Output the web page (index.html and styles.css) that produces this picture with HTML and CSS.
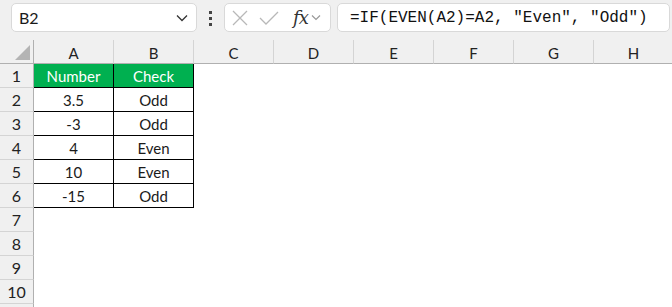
FILE: index.html
```html
<!DOCTYPE html>
<html lang="en">
<head>
  <meta charset="UTF-8" />
  <title>Sheet – EVEN check</title>
  <link rel="stylesheet" href="styles.css">
</head>
<body>
  <div class="toolbar">
    <div class="name-box">
      <span>B2</span>
      <svg class="chev" width="12" height="8" viewBox="0 0 12 8"><path d="M1 1.5 L6 6.5 L11 1.5" fill="none" stroke="#333" stroke-width="1.3"/></svg>
    </div>
    <div class="dots"><i></i><i></i><i></i></div>
    <div class="fx-box">
      <svg width="18" height="18" viewBox="0 0 18 18"><path d="M2 2 L16 16 M16 2 L2 16" stroke="#b8b8b8" stroke-width="1.3" fill="none"/></svg>
      <svg width="20" height="18" viewBox="0 0 20 18"><path d="M1 9 L7 15 L19 3" stroke="#b8b8b8" stroke-width="1.3" fill="none"/></svg>
      <span class="fx">fx</span>
      <svg class="chev-sm" width="10" height="7" viewBox="0 0 10 7"><path d="M1 1.5 L5 5.5 L9 1.5" fill="none" stroke="#999" stroke-width="1.2"/></svg>
    </div>
    <div class="formula">=IF(EVEN(A2)=A2, "Even", "Odd")</div>
  </div>

  <div class="sheet">
    <div class="corner"><span class="tri"></span></div>
    <div class="col-head">A</div>
    <div class="col-head">B</div>
    <div class="col-head">C</div>
    <div class="col-head">D</div>
    <div class="col-head">E</div>
    <div class="col-head">F</div>
    <div class="col-head">G</div>
    <div class="col-head">H</div>

    <div class="row-head">1</div>
    <div class="cell th">Number</div><div class="cell th">Check</div>
    <div class="blank"></div><div class="blank"></div><div class="blank"></div><div class="blank"></div><div class="blank"></div><div class="blank"></div>

    <div class="row-head">2</div>
    <div class="cell">3.5</div><div class="cell">Odd</div>
    <div class="blank"></div><div class="blank"></div><div class="blank"></div><div class="blank"></div><div class="blank"></div><div class="blank"></div>

    <div class="row-head">3</div>
    <div class="cell">-3</div><div class="cell">Odd</div>
    <div class="blank"></div><div class="blank"></div><div class="blank"></div><div class="blank"></div><div class="blank"></div><div class="blank"></div>

    <div class="row-head">4</div>
    <div class="cell">4</div><div class="cell">Even</div>
    <div class="blank"></div><div class="blank"></div><div class="blank"></div><div class="blank"></div><div class="blank"></div><div class="blank"></div>

    <div class="row-head">5</div>
    <div class="cell">10</div><div class="cell">Even</div>
    <div class="blank"></div><div class="blank"></div><div class="blank"></div><div class="blank"></div><div class="blank"></div><div class="blank"></div>

    <div class="row-head">6</div>
    <div class="cell">-15</div><div class="cell">Odd</div>
    <div class="blank"></div><div class="blank"></div><div class="blank"></div><div class="blank"></div><div class="blank"></div><div class="blank"></div>

    <div class="row-head">7</div>
    <div class="blank wide"></div>
    <div class="row-head">8</div>
    <div class="blank wide"></div>
    <div class="row-head">9</div>
    <div class="blank wide"></div>
    <div class="row-head">10</div>
    <div class="blank wide"></div>
    <div class="row-head"></div>
    <div class="blank wide"></div>
  </div>
</body>
</html>
```

FILE: styles.css
```css
:root {
  --ui: #f0f0f0;
  --line: #d4d4d4;
  --head-line: #b0b0b0;
  --green: #00b050;
  --ink: #1a1a1a;
}
* { box-sizing: border-box; }
html, body {
  margin: 0;
  padding: 0;
  overflow: hidden;
  background: #fff;
  font-family: Lato, "Open Sans", sans-serif;
  color: var(--ink);
}

/* formula bar */
.toolbar {
  display: flex;
  align-items: flex-start;
  height: 40px;
  padding: 3px 0 0 11px;
  background: var(--ui);
}
.name-box, .fx-box, .formula {
  height: 29px;
  background: #fff;
  border: 1px solid #d9d9d9;
  border-radius: 5px;
  display: flex;
  align-items: center;
}
.name-box {
  width: 186px;
  padding: 0 8px 0 7px;
  justify-content: space-between;
  font-size: 16px;
}
.dots {
  width: 27px;
  display: flex;
  flex-direction: column;
  align-items: center;
  gap: 3px;
  padding-top: 8px;
}
.dots i {
  display: block;
  width: 3px;
  height: 3px;
  background: #444;
}
.fx-box {
  width: 107px;
  padding: 0 0 0 6px;
  gap: 10px;
}
.fx-box .fx {
  font-family: "DejaVu Serif", "Liberation Serif", serif;
  font-style: italic;
  font-size: 18px;
  color: #333;
  margin-left: 4px;
  letter-spacing: -1px;
}
.chev-sm { margin-left: -7px; }
.formula {
  margin-left: 6px;
  width: 333px;
  padding-left: 12px;
  font-family: "Liberation Mono", "DejaVu Sans Mono", monospace;
  font-size: 16px;
  color: #111;
}

/* grid */
.sheet {
  display: grid;
  grid-template-columns: 34px repeat(8, 80px);
  grid-template-rows: 24px;
  grid-auto-rows: 24px;
  font-size: 15px;
}
.corner, .col-head, .row-head {
  background: var(--ui);
  display: flex;
  align-items: center;
  justify-content: center;
  color: #222;
}
.corner {
  border-bottom: 1px solid var(--head-line);
  border-right: 1px solid var(--head-line);
  position: relative;
}
.tri {
  position: absolute;
  right: 3px;
  bottom: 3px;
  width: 0;
  height: 0;
  border-left: 15px solid transparent;
  border-bottom: 15px solid #b4b4b4;
}
.col-head {
  border-bottom: 1px solid var(--head-line);
  border-right: 1px solid var(--line);
  padding-top: 2px;
}
.row-head {
  border-right: 1px solid var(--head-line);
  border-bottom: 1px solid var(--line);
  font-size: 16px;
}
.cell {
  display: flex;
  align-items: center;
  justify-content: center;
  border-right: 1px solid #000;
  border-bottom: 1px solid #000;
  background: #fff;
}
.cell.th {
  background: var(--green);
  color: #fff;
}
.blank { background: #fff; }
.wide { grid-column: 2 / span 8; }
```
